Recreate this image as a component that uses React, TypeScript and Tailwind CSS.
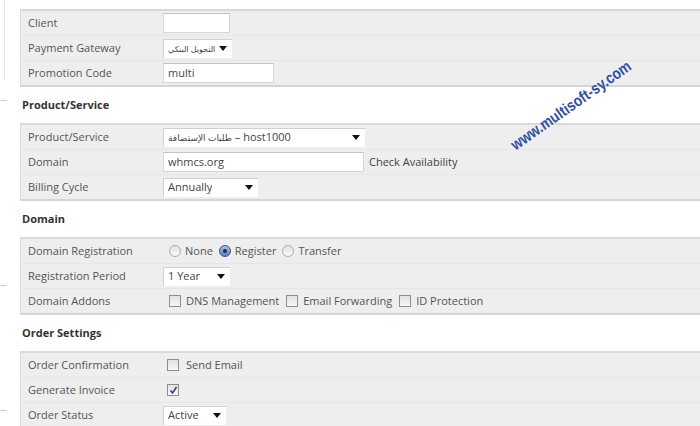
import React from 'react';

const font = { fontFamily: '"Open Sans", "DejaVu Sans", sans-serif' };

const Select: React.FC<{ w: string; small?: boolean; children: React.ReactNode }> = ({ w, small, children }) => (
  <div className={`${w} h-[19px] bg-white border-t border-l border-[#d0d0d0] flex items-center justify-between pl-[4px] pr-[5px] text-[11px] text-[#444]`}>
    <span className={`whitespace-nowrap overflow-hidden ${small ? 'text-[8px]' : ''}`}>{children}</span>
    <svg width="8" height="5" viewBox="0 0 8 5" className="shrink-0 ml-[3px]">
      <path d="M0 0 L8 0 L4 5 Z" fill="#111" />
    </svg>
  </div>
);

const Input: React.FC<{ w: string; value?: string }> = ({ w, value }) => (
  <div className={`${w} h-[20px] bg-white border border-[#d6d6d6] border-t-[#c4c4c4] flex items-center px-[4px] text-[11px] text-[#444]`}>
    {value}
  </div>
);

const Check: React.FC<{ checked?: boolean }> = ({ checked }) => (
  <span className="inline-flex w-[12px] h-[12px] border border-[#8e8e8e] bg-gradient-to-b from-[#e2e2e2] to-[#f7f7f7] items-center justify-center shrink-0">
    {checked && (
      <svg width="9" height="9" viewBox="0 0 9 9">
        <path d="M1.5 4.5 L3.5 7 L7.5 1" stroke="#2c3e7a" strokeWidth="1.5" fill="none" />
      </svg>
    )}
  </span>
);

const Radio: React.FC<{ on?: boolean }> = ({ on }) => (
  <span className={`inline-flex w-[12px] h-[12px] rounded-full border items-center justify-center shrink-0 ${on ? 'border-[#34518f] bg-gradient-to-b from-[#a9c0e6] to-[#5d80c2]' : 'border-[#aaaaaa] bg-gradient-to-b from-[#e0e0e0] to-[#fafafa]'}`}>
    {on && <span className="w-[4px] h-[4px] rounded-full bg-[#1a2a55]" />}
  </span>
);

const Row: React.FC<{ label: string; last?: boolean; children?: React.ReactNode }> = ({ label, last, children }) => (
  <div className={`grid grid-cols-[142px_1fr] items-center ${last ? 'h-[24px]' : 'h-[25px] border-b border-[#e6e6e6]'}`}>
    <div className="pl-[7px] text-[11px] text-[#555]">{label}</div>
    <div className="flex items-center">{children}</div>
  </div>
);

const Table: React.FC<{ children: React.ReactNode }> = ({ children }) => (
  <div className="bg-[#eeeeee] border-t-2 border-b-2 border-l border-t-[#d9d9d9] border-b-[#d5d5d5] border-l-[#dadada]">
    {children}
  </div>
);

const Heading: React.FC<{ children: React.ReactNode }> = ({ children }) => (
  <div className="h-[36px] flex items-center pl-[2px] text-[11px] font-bold text-[#333]">{children}</div>
);

export default function App() {
  return (
    <div className="relative w-[700px] h-[426px] overflow-hidden bg-white" style={font}>
      <div className="flex">
        <div className="w-[20px] shrink-0">
          <div className="w-[5px] h-[80px] border-r border-[#e4e4e4]" />
          <div className="mt-[20px] w-[7px] border-t border-[#cfcfcf]" />
          <div className="mt-[184px] w-[7px] border-t border-[#cfcfcf]" />
          <div className="mt-[124px] w-[7px] border-t border-[#cfcfcf]" />
        </div>

        <div className="flex-1 pt-[9px]">
          <Table>
            <Row label="Client">
              <Input w="w-[67px]" />
            </Row>
            <Row label="Payment Gateway">
              <Select w="w-[69px]" small>التحويل البنكي</Select>
            </Row>
            <Row label="Promotion Code" last>
              <Input w="w-[111px]" value="multi" />
            </Row>
          </Table>

          <Heading>Product/Service</Heading>
          <Table>
            <Row label="Product/Service">
              <Select w="w-[202px]">
                <span className="text-[9px]">طلبات الإستضافة</span> – host1000
              </Select>
            </Row>
            <Row label="Domain">
              <Input w="w-[201px]" value="whmcs.org" />
              <span className="ml-[5px] text-[11px] text-[#444]">Check Availability</span>
            </Row>
            <Row label="Billing Cycle" last>
              <Select w="w-[95px]">Annually</Select>
            </Row>
          </Table>

          <Heading>Domain</Heading>
          <Table>
            <Row label="Domain Registration">
              <div className="flex items-center pl-[6px] gap-[4px] text-[11px] text-[#555]">
                <Radio />
                <span className="mr-[2px]">None</span>
                <Radio on />
                <span className="mr-[2px]">Register</span>
                <Radio />
                <span>Transfer</span>
              </div>
            </Row>
            <Row label="Registration Period">
              <Select w="w-[67px]">1 Year</Select>
            </Row>
            <Row label="Domain Addons" last>
              <div className="flex items-center pl-[6px] gap-[5px] text-[11px] text-[#555]">
                <Check />
                <span className="mr-[2px]">DNS Management</span>
                <Check />
                <span className="mr-[2px]">Email Forwarding</span>
                <Check />
                <span>ID Protection</span>
              </div>
            </Row>
          </Table>

          <Heading>Order Settings</Heading>
          <Table>
            <Row label="Order Confirmation">
              <div className="flex items-center pl-[4px] gap-[7px] text-[11px] text-[#555]">
                <Check />
                <span>Send Email</span>
              </div>
            </Row>
            <Row label="Generate Invoice">
              <div className="pl-[4px] flex">
                <Check checked />
              </div>
            </Row>
            <Row label="Order Status" last>
              <Select w="w-[63px]">Active</Select>
            </Row>
          </Table>
        </div>
      </div>

      <div
        className="absolute left-[470px] top-[94px] w-[200px] h-[20px] text-center text-[16px] font-bold text-[#2f4ea6] whitespace-nowrap"
        style={{ fontFamily: '"Liberation Sans", Arial, sans-serif', transform: 'rotate(-35deg) scaleX(0.85)' }}
      >
        www.multisoft-sy.com
      </div>
    </div>
  );
}
